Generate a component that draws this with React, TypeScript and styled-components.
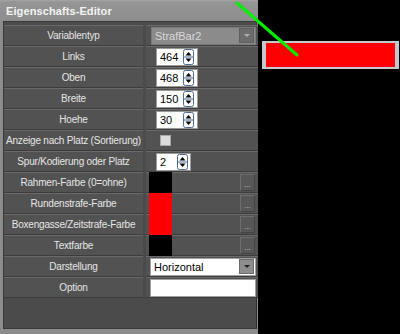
import React from "react";
import styled, { createGlobalStyle } from "styled-components";

const GlobalStyle = createGlobalStyle`
  html, body { margin: 0; padding: 0; background: #000; }
  body { width: 400px; height: 334px; overflow: hidden; font-family: "Liberation Sans", Arial, sans-serif; }
`;

const Stage = styled.div`
  position: relative;
  display: flex;
  width: 400px;
  height: 334px;
  background: #000;
`;

const Window = styled.div`
  width: 258px;
  height: 334px;
  display: flex;
  flex-direction: column;
  background: #8c8c8c;
  box-sizing: border-box;
`;

const TitleBar = styled.div`
  height: 21px;
  flex: none;
  display: flex;
  align-items: center;
  padding-left: 6px;
  background: linear-gradient(#a4a4a4 0px, #959595 2px, #8d8d8d 100%);
  color: #f4f4f4;
  font-weight: bold;
  font-size: 11px;
  letter-spacing: 0.1px;
`;

const Body = styled.div`
  flex: 1;
  margin: 0 1px 5px 3px;
  background: #4b4b4b;
  border: 1px solid #3a3a3a;
  border-right-color: #2e2e2e;
  padding-top: 3px;
  box-sizing: border-box;
`;

const Row = styled.div`
  display: grid;
  grid-template-columns: 139px 112px;
  column-gap: 3px;
  height: 21px;
`;

const Cell = styled.div`
  box-sizing: border-box;
  height: 21px;
  background: #525252;
  border-top: 1px solid #6a6a6a;
  border-bottom: 1px solid #3c3c3c;
  display: flex;
  align-items: center;
`;

const Label = styled(Cell)`
  justify-content: center;
  color: #e6e6e6;
  font-size: 10px;
  letter-spacing: -0.2px;
  white-space: nowrap;
`;

const Value = styled(Cell)<{ $pad?: number }>`
  padding-left: ${(p) => p.$pad ?? 10}px;
  padding-right: 2px;
  position: relative;
`;

const NumBox = styled.div<{ $w: number }>`
  width: ${(p) => p.$w}px;
  height: 18px;
  background: #fff;
  border: 1px solid #9a9a9a;
  box-sizing: border-box;
  display: flex;
  align-items: center;
  padding-left: 3px;
  font-size: 11px;
  color: #000;
`;

const NumText = styled.span`
  flex: 1;
`;

const Spin = styled.svg<{ $mr?: number }>`
  width: 11px;
  height: 16px;
  flex: none;
  margin-right: ${(p) => p.$mr ?? 3}px;
`;

const Spinner = ({ mr }: { mr?: number }) => (
  <Spin viewBox="0 0 11 16" $mr={mr}>
    <rect x="0.5" y="0.5" width="10" height="15" rx="2" fill="#fff" stroke="#4a6a9a" />
    <line x1="1" y1="8" x2="10" y2="8" stroke="#4a6a9a" />
    <path d="M5.5 3 L8.5 6.5 L2.5 6.5 Z" fill="#000" />
    <path d="M5.5 13 L8.5 9.5 L2.5 9.5 Z" fill="#000" />
  </Spin>
);

const GraySelect = styled.div`
  flex: 1;
  height: 18px;
  box-sizing: border-box;
  background: #8b8b8b;
  border: 1px solid #7a7a7a;
  display: flex;
  align-items: center;
  padding-left: 3px;
  font-size: 11px;
  color: #d8d8d8;
`;

const WhiteSelect = styled(GraySelect)`
  background: #fff;
  border: 1px solid #a0a0a0;
  color: #000;
`;

const SelText = styled.span`
  flex: 1;
`;

const DropBtn = styled.div<{ $dark?: boolean }>`
  width: 15px;
  height: 15px;
  margin-right: 1px;
  box-sizing: border-box;
  background: ${(p) => (p.$dark ? "#6c6c6c" : "#8e8e8e")};
  border: 1px solid ${(p) => (p.$dark ? "#5e5e5e" : "#6a6a6a")};
  display: flex;
  align-items: center;
  justify-content: center;
  &::after {
    content: "";
    border-left: 3px solid transparent;
    border-right: 3px solid transparent;
    border-top: 3px solid ${(p) => (p.$dark ? "#b0b0b0" : "#222")};
  }
`;

const Check = styled.div`
  width: 9px;
  height: 9px;
  margin-left: 4px;
  background: #dcdcdc;
  border: 1px solid #a8a8a8;
`;

const Swatch = styled.div<{ $c: string }>`
  align-self: stretch;
  width: 23px;
  margin: -1px 0 -1px 1px;
  background: ${(p) => p.$c};
`;

const Filler = styled.div`
  flex: 1;
`;

const DotsBtn = styled.div`
  width: 15px;
  height: 17px;
  box-sizing: border-box;
  border: 1px solid #6e6e6e;
  border-right-color: #444;
  border-bottom-color: #444;
  background: #575757;
  color: #c8c8c8;
  font-size: 8px;
  display: flex;
  align-items: flex-end;
  justify-content: center;
  line-height: 10px;
  margin-right: 1px;
`;

const TextInput = styled.div`
  flex: 1;
  height: 18px;
  background: #fff;
  border: 1px solid #a0a0a0;
  box-sizing: border-box;
`;

const Canvas = styled.div`
  position: relative;
  flex: 1;
  background: #000;
`;

const BarBox = styled.div`
  position: absolute;
  left: 4px;
  top: 41px;
  width: 137px;
  height: 28px;
  box-sizing: border-box;
  padding: 2px 4px 2px 4px;
  background: #c4c8d0;
`;

const BarFill = styled.div`
  width: 100%;
  height: 100%;
  background: #ff0000;
`;

const Overlay = styled.svg`
  position: absolute;
  left: 0;
  top: 0;
  width: 400px;
  height: 334px;
  pointer-events: none;
`;

type RowDef = { label: string; value: React.ReactNode; pad?: number };

const rows: RowDef[] = [
  {
    label: "Variablentyp",
    pad: 5,
    value: (
      <GraySelect>
        <SelText>StrafBar2</SelText>
        <DropBtn $dark />
      </GraySelect>
    ),
  },
  { label: "Links", value: <NumBox $w={42}><NumText>464</NumText><Spinner /></NumBox> },
  { label: "Oben", value: <NumBox $w={42}><NumText>468</NumText><Spinner /></NumBox> },
  { label: "Breite", value: <NumBox $w={42}><NumText>150</NumText><Spinner /></NumBox> },
  { label: "Hoehe", value: <NumBox $w={42}><NumText>30</NumText><Spinner /></NumBox> },
  { label: "Anzeige nach Platz (Sortierung)", value: <Check /> },
  { label: "Spur/Kodierung oder Platz", value: <NumBox $w={35}><NumText>2</NumText><Spinner mr={2} /></NumBox> },
  { label: "Rahmen-Farbe (0=ohne)", pad: 2, value: <><Swatch $c="#000" /><Filler /><DotsBtn>...</DotsBtn></> },
  { label: "Rundenstrafe-Farbe", pad: 2, value: <><Swatch $c="#ff0000" /><Filler /><DotsBtn>...</DotsBtn></> },
  { label: "Boxengasse/Zeitstrafe-Farbe", pad: 2, value: <><Swatch $c="#ff0000" /><Filler /><DotsBtn>...</DotsBtn></> },
  { label: "Textfarbe", pad: 2, value: <><Swatch $c="#000" /><Filler /><DotsBtn>...</DotsBtn></> },
  {
    label: "Darstellung",
    pad: 4,
    value: (
      <WhiteSelect>
        <SelText>Horizontal</SelText>
        <DropBtn />
      </WhiteSelect>
    ),
  },
  { label: "Option", pad: 4, value: <TextInput /> },
];

export default function App() {
  return (
    <>
      <GlobalStyle />
      <Stage>
        <Window>
          <TitleBar>Eigenschafts-Editor</TitleBar>
          <Body>
            {rows.map((r) => (
              <Row key={r.label}>
                <Label>{r.label}</Label>
                <Value $pad={r.pad}>{r.value}</Value>
              </Row>
            ))}
          </Body>
        </Window>
        <Canvas>
          <BarBox>
            <BarFill />
          </BarBox>
        </Canvas>
        <Overlay viewBox="0 0 400 334">
          <line x1="237" y1="3" x2="297" y2="55" stroke="#00ee00" strokeWidth="3" strokeLinecap="round" />
        </Overlay>
      </Stage>
    </>
  );
}
